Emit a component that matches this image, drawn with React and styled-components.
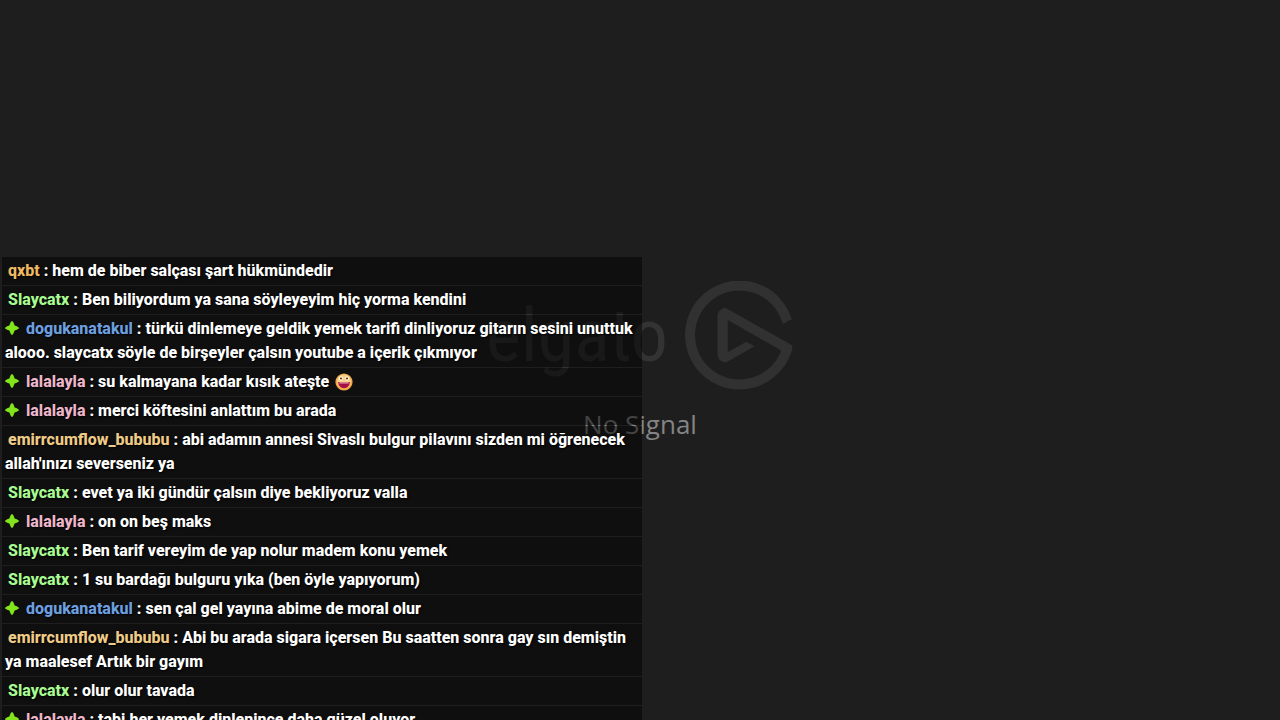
import React from "react";
import styled, { createGlobalStyle } from "styled-components";

const messages = [
  { user: "qxbt", color: "#eeb962", text: "hem de biber salçası şart hükmündedir" },
  { user: "Slaycatx", color: "#a8fb92", text: "Ben biliyordum ya sana söyleyeyim hiç yorma kendini" },
  {
    user: "dogukanatakul",
    color: "#6c9fe0",
    badge: true,
    text: "türkü dinlemeye geldik yemek tarifi dinliyoruz gitarın sesini unuttuk alooo. slaycatx söyle de birşeyler çalsın youtube a içerik çıkmıyor",
  },
  { user: "lalalayla", color: "#edb6ca", badge: true, text: "su kalmayana kadar kısık ateşte", smile: true },
  { user: "lalalayla", color: "#edb6ca", badge: true, text: "merci köftesini anlattım bu arada" },
  {
    user: "emirrcumflow_bububu",
    color: "#efcb88",
    text: "abi adamın annesi Sivaslı bulgur pilavını sizden mi öğrenecek allah'ınızı severseniz ya",
  },
  { user: "Slaycatx", color: "#a8fb92", text: "evet ya iki gündür çalsın diye bekliyoruz valla" },
  { user: "lalalayla", color: "#edb6ca", badge: true, text: "on on beş maks" },
  { user: "Slaycatx", color: "#a8fb92", text: "Ben tarif vereyim de yap nolur madem konu yemek" },
  { user: "Slaycatx", color: "#a8fb92", text: "1 su bardağı bulguru yıka (ben öyle yapıyorum)" },
  { user: "dogukanatakul", color: "#6c9fe0", badge: true, text: "sen çal gel yayına abime de moral olur" },
  {
    user: "emirrcumflow_bububu",
    color: "#efcb88",
    text: "Abi bu arada sigara içersen Bu saatten sonra gay sın demiştin ya maalesef Artık bir gayım",
  },
  { user: "Slaycatx", color: "#a8fb92", text: "olur olur tavada" },
  { user: "lalalayla", color: "#edb6ca", badge: true, text: "tabi her yemek dinlenince daha güzel oluyor" },
];

const Badge = () => (
  <BadgeStyled viewBox="0 0 14 14" aria-hidden="true">
    <path
      d="M7 0 C8 0 8.8 2.2 9.6 4.4 C11.8 5.2 14 6 14 7 C14 8 11.8 8.8 9.6 9.6 C8.8 11.8 8 14 7 14 C6 14 5.2 11.8 4.4 9.6 C2.2 8.8 0 8 0 7 C0 6 2.2 5.2 4.4 4.4 C5.2 2.2 6 0 7 0 Z"
      fill="#84e41c"
    />
  </BadgeStyled>
);

const Smile = () => (
  <SmileStyled viewBox="0 0 18 18" role="img" aria-label="grinning face">
    <circle cx="9" cy="9" r="8.6" fill="#f3a94a" />
    <circle cx="9" cy="8.4" r="6.8" fill="#fbcf85" />
    <ellipse cx="5.8" cy="5.6" rx="2.1" ry="2.3" fill="#fff3d2" />
    <ellipse cx="12.2" cy="5.6" rx="2.1" ry="2.3" fill="#fff3d2" />
    <circle cx="6" cy="5.6" r="1" fill="#4a2b1c" />
    <circle cx="12" cy="5.6" r="1" fill="#4a2b1c" />
    <path d="M3.2 9 H14.8 C14.6 13 12.2 15.2 9 15.2 C5.8 15.2 3.4 13 3.2 9 Z" fill="#a50f45" />
    <path d="M4.4 9.4 H13.6 V10.4 H4.4 Z" fill="#f6d3c4" />
  </SmileStyled>
);

const ElgatoMark = () => (
  <MarkStyled viewBox="0 0 110 110" aria-hidden="true">
    <path d="M103 40 A49.5 49.5 0 1 0 102 71" fill="none" stroke="#313131" strokeWidth="10" />
    <path
      d="M107.5 37.500 L99.5 43 L97 38 L104 34 Z M43 27.7 L108.5 64.5 Q108.500 70 106 74 L97 70 L96.3 69 L43.7 39 V71.3 L62.3 60.7 L70.5 65.3 L43 81 Q40 82 37 80 Q33.500 77.5 33.5 73 V35 Q33.5 31 36.5 29 Q40 26 43 27.7 Z"
      fill="#313131"
    />
  </MarkStyled>
);

const Message = ({ user, color, badge, text, smile }) => (
  <MessageStyled>
    {badge && <Badge />}
    <UserName $color={color} $badge={badge}>
      {user}
    </UserName>
    {" : "}
    {text}
    {smile && <Smile />}
  </MessageStyled>
);

const App = () => {
  return (
    <>
      <GlobalStyle />
      <Screen>
        <NoSignal>
          <Brand>
            <BrandName>elgato</BrandName>
            <ElgatoMark />
          </Brand>
          <Status>No Signal</Status>
        </NoSignal>
        <Chat>
          {messages.map((message, index) => (
            <Message key={index} {...message} />
          ))}
        </Chat>
      </Screen>
    </>
  );
};

export default App;

const GlobalStyle = createGlobalStyle`
  body {
    margin: 0;
    background: #1e1e1e;
  }
`;

const Screen = styled.main`
  display: grid;
  grid-template: 100vh / 100%;
  height: 100vh;
  overflow: hidden;
`;

const NoSignal = styled.section`
  grid-area: 1 / 1;
  display: flex;
  flex-direction: column;
  align-items: center;
  justify-content: center;
  gap: 18px;
`;

const Brand = styled.div`
  display: flex;
  align-items: center;
  gap: 16px;
`;

const BrandName = styled.span`
  font-family: "Roboto Condensed", Roboto, sans-serif;
  font-size: 74px;
  line-height: 110px;
  color: #333;
`;

const MarkStyled = styled.svg`
  width: 110px;
  height: 110px;
`;

const Status = styled.p`
  margin: 0;
  font-family: "Open Sans", "Noto Sans", sans-serif;
  font-size: 26px;
  line-height: 30px;
  color: #848484;
`;

const Chat = styled.ul`
  grid-area: 1 / 1;
  position: relative;
  display: flex;
  flex-direction: column;
  gap: 1px;
  width: 50%;
  margin: 257px 0 0 2px;
  padding: 0;
  list-style: none;
`;

const MessageStyled = styled.li`
  flex: none;
  padding: 2px 3px;
  background: rgba(0, 0, 0, 0.5);
  font-family: Roboto, sans-serif;
  font-weight: 800;
  font-size: 16px;
  line-height: 24px;
  color: #fff;
  text-shadow: 1px 1px 2px #000;
`;

const UserName = styled.span`
  margin-left: ${(props) => (props.$badge ? "7px" : "3px")};
  color: ${(props) => props.$color};
`;

const BadgeStyled = styled.svg`
  width: 14px;
  height: 14px;
  vertical-align: -1px;
`;

const SmileStyled = styled.svg`
  width: 18px;
  height: 18px;
  margin-left: 6px;
  vertical-align: -4px;
`;
